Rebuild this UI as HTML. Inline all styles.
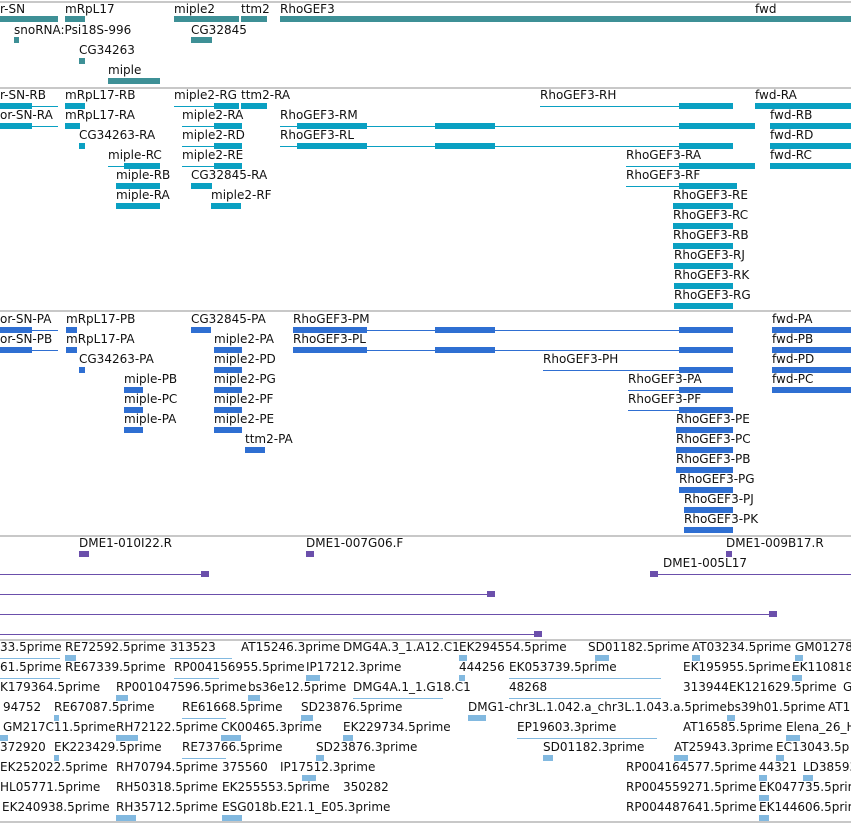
<!DOCTYPE html>
<html><head><meta charset="utf-8"><style>
body{margin:0;width:851px;height:823px;background:#fff;position:relative;overflow:hidden}
.t{position:absolute;font:12px "DejaVu Sans",sans-serif;line-height:14px;white-space:nowrap;color:#111;margin-top:0px}
.b{position:absolute;height:6px}
.l{position:absolute;height:1px}
.s{position:absolute;left:0;width:851px;height:2px;background:#c8c8c8}
.g{background:#3e9096}.x{background:#0aa0c2}.p{background:#2f6fd2}.u{background:#6b4fab}.e{background:#82b9e0}
</style></head><body>
<div class="s" style="top:1px"></div>
<div class="s" style="top:87px"></div>
<div class="s" style="top:310px"></div>
<div class="s" style="top:535px"></div>
<div class="s" style="top:639px"></div>
<div class="s" style="top:821px"></div>

<!-- genes -->
<div class="t" style="left:0;top:2px">r-SN</div><div class="b g" style="left:0;top:16px;width:58px"></div>
<div class="t" style="left:65px;top:2px">mRpL17</div><div class="b g" style="left:65px;top:16px;width:20px"></div>
<div class="t" style="left:174px;top:2px">miple2</div><div class="b g" style="left:174px;top:16px;width:65px"></div>
<div class="t" style="left:241px;top:2px">ttm2</div><div class="b g" style="left:241px;top:16px;width:26px"></div>
<div class="t" style="left:280px;top:2px">RhoGEF3</div><div class="b g" style="left:280px;top:16px;width:475px"></div>
<div class="t" style="left:755px;top:2px">fwd</div><div class="b g" style="left:755px;top:16px;width:96px"></div>
<div class="t" style="left:14px;top:23px">snoRNA:Psi18S-996</div><div class="b g" style="left:14px;top:37px;width:5px"></div>
<div class="t" style="left:191px;top:23px">CG32845</div><div class="b g" style="left:191px;top:37px;width:21px"></div>
<div class="t" style="left:79px;top:43px">CG34263</div><div class="b g" style="left:79px;top:58px;width:6px"></div>
<div class="t" style="left:108px;top:63px">miple</div><div class="b g" style="left:108px;top:78px;width:52px"></div>

<!-- transcripts -->
<div class="t" style="left:0;top:88px">r-SN-RB</div><div class="l x" style="left:0;top:106px;width:58px"></div><div class="b x" style="left:0;top:103px;width:32px"></div>
<div class="t" style="left:65px;top:88px">mRpL17-RB</div><div class="b x" style="left:65px;top:103px;width:20px"></div>
<div class="t" style="left:174px;top:88px">miple2-RG</div><div class="l x" style="left:174px;top:106px;width:65px"></div><div class="b x" style="left:214px;top:103px;width:25px"></div>
<div class="t" style="left:241px;top:88px">ttm2-RA</div><div class="b x" style="left:241px;top:103px;width:26px"></div>
<div class="t" style="left:540px;top:88px">RhoGEF3-RH</div><div class="l x" style="left:540px;top:106px;width:193px"></div><div class="b x" style="left:679px;top:103px;width:54px"></div>
<div class="t" style="left:755px;top:88px">fwd-RA</div><div class="b x" style="left:755px;top:103px;width:96px"></div>

<div class="t" style="left:0;top:108px">or-SN-RA</div><div class="l x" style="left:0;top:126px;width:58px"></div><div class="b x" style="left:0;top:123px;width:32px"></div>
<div class="t" style="left:65px;top:108px">mRpL17-RA</div><div class="b x" style="left:65px;top:123px;width:15px"></div>
<div class="t" style="left:182px;top:108px">miple2-RA</div><div class="l x" style="left:182px;top:126px;width:60px"></div><div class="b x" style="left:214px;top:123px;width:28px"></div>
<div class="t" style="left:280px;top:108px">RhoGEF3-RM</div><div class="l x" style="left:280px;top:126px;width:475px"></div><div class="b x" style="left:297px;top:123px;width:70px"></div><div class="b x" style="left:435px;top:123px;width:60px"></div><div class="b x" style="left:679px;top:123px;width:76px"></div>
<div class="t" style="left:770px;top:108px">fwd-RB</div><div class="b x" style="left:770px;top:123px;width:81px"></div>

<div class="t" style="left:79px;top:128px">CG34263-RA</div><div class="b x" style="left:79px;top:143px;width:6px"></div>
<div class="t" style="left:182px;top:128px">miple2-RD</div><div class="l x" style="left:182px;top:146px;width:60px"></div><div class="b x" style="left:214px;top:143px;width:28px"></div>
<div class="t" style="left:280px;top:128px">RhoGEF3-RL</div><div class="l x" style="left:280px;top:146px;width:453px"></div><div class="b x" style="left:297px;top:143px;width:70px"></div><div class="b x" style="left:435px;top:143px;width:60px"></div><div class="b x" style="left:679px;top:143px;width:54px"></div>
<div class="t" style="left:770px;top:128px">fwd-RD</div><div class="b x" style="left:770px;top:143px;width:81px"></div>

<div class="t" style="left:108px;top:148px">miple-RC</div><div class="l x" style="left:108px;top:166px;width:52px"></div><div class="b x" style="left:124px;top:163px;width:36px"></div>
<div class="t" style="left:182px;top:148px">miple2-RE</div><div class="l x" style="left:182px;top:166px;width:60px"></div><div class="b x" style="left:214px;top:163px;width:28px"></div>
<div class="t" style="left:626px;top:148px">RhoGEF3-RA</div><div class="l x" style="left:626px;top:166px;width:129px"></div><div class="b x" style="left:679px;top:163px;width:76px"></div>
<div class="t" style="left:770px;top:148px">fwd-RC</div><div class="b x" style="left:770px;top:163px;width:81px"></div>

<div class="t" style="left:116px;top:168px">miple-RB</div><div class="b x" style="left:116px;top:183px;width:44px"></div>
<div class="t" style="left:191px;top:168px">CG32845-RA</div><div class="b x" style="left:191px;top:183px;width:21px"></div>
<div class="t" style="left:626px;top:168px">RhoGEF3-RF</div><div class="l x" style="left:626px;top:186px;width:111px"></div><div class="b x" style="left:679px;top:183px;width:58px"></div>

<div class="t" style="left:116px;top:188px">miple-RA</div><div class="b x" style="left:116px;top:203px;width:44px"></div>
<div class="t" style="left:211px;top:188px">miple2-RF</div><div class="b x" style="left:211px;top:203px;width:30px"></div>
<div class="t" style="left:673px;top:188px">RhoGEF3-RE</div><div class="b x" style="left:673px;top:203px;width:60px"></div>
<div class="t" style="left:673px;top:208px">RhoGEF3-RC</div><div class="b x" style="left:673px;top:223px;width:60px"></div>
<div class="t" style="left:673px;top:228px">RhoGEF3-RB</div><div class="b x" style="left:673px;top:243px;width:60px"></div>
<div class="t" style="left:674px;top:248px">RhoGEF3-RJ</div><div class="b x" style="left:674px;top:263px;width:59px"></div>
<div class="t" style="left:674px;top:268px">RhoGEF3-RK</div><div class="b x" style="left:674px;top:283px;width:59px"></div>
<div class="t" style="left:674px;top:288px">RhoGEF3-RG</div><div class="b x" style="left:674px;top:303px;width:59px"></div>

<!-- proteins -->
<div class="t" style="left:0;top:312px">or-SN-PA</div><div class="l p" style="left:0;top:330px;width:58px"></div><div class="b p" style="left:0;top:327px;width:32px"></div>
<div class="t" style="left:66px;top:312px">mRpL17-PB</div><div class="b p" style="left:66px;top:327px;width:11px"></div>
<div class="t" style="left:191px;top:312px">CG32845-PA</div><div class="b p" style="left:191px;top:327px;width:20px"></div>
<div class="t" style="left:293px;top:312px">RhoGEF3-PM</div><div class="l p" style="left:293px;top:330px;width:440px"></div><div class="b p" style="left:293px;top:327px;width:74px"></div><div class="b p" style="left:435px;top:327px;width:60px"></div><div class="b p" style="left:679px;top:327px;width:54px"></div>
<div class="t" style="left:772px;top:312px">fwd-PA</div><div class="b p" style="left:772px;top:327px;width:79px"></div>

<div class="t" style="left:0;top:332px">or-SN-PB</div><div class="l p" style="left:0;top:350px;width:58px"></div><div class="b p" style="left:0;top:347px;width:32px"></div>
<div class="t" style="left:66px;top:332px">mRpL17-PA</div><div class="b p" style="left:66px;top:347px;width:11px"></div>
<div class="t" style="left:214px;top:332px">miple2-PA</div><div class="b p" style="left:214px;top:347px;width:28px"></div>
<div class="t" style="left:293px;top:332px">RhoGEF3-PL</div><div class="l p" style="left:293px;top:350px;width:440px"></div><div class="b p" style="left:293px;top:347px;width:74px"></div><div class="b p" style="left:435px;top:347px;width:60px"></div><div class="b p" style="left:679px;top:347px;width:54px"></div>
<div class="t" style="left:772px;top:332px">fwd-PB</div><div class="b p" style="left:772px;top:347px;width:79px"></div>

<div class="t" style="left:79px;top:352px">CG34263-PA</div><div class="b p" style="left:79px;top:367px;width:6px"></div>
<div class="t" style="left:214px;top:352px">miple2-PD</div><div class="b p" style="left:214px;top:367px;width:28px"></div>
<div class="t" style="left:543px;top:352px">RhoGEF3-PH</div><div class="l p" style="left:543px;top:370px;width:190px"></div><div class="b p" style="left:679px;top:367px;width:54px"></div>
<div class="t" style="left:772px;top:352px">fwd-PD</div><div class="b p" style="left:772px;top:367px;width:79px"></div>

<div class="t" style="left:124px;top:372px">miple-PB</div><div class="b p" style="left:124px;top:387px;width:19px"></div>
<div class="t" style="left:214px;top:372px">miple2-PG</div><div class="b p" style="left:214px;top:387px;width:28px"></div>
<div class="t" style="left:628px;top:372px">RhoGEF3-PA</div><div class="l p" style="left:628px;top:390px;width:105px"></div><div class="b p" style="left:679px;top:387px;width:54px"></div>
<div class="t" style="left:772px;top:372px">fwd-PC</div><div class="b p" style="left:772px;top:387px;width:79px"></div>

<div class="t" style="left:124px;top:392px">miple-PC</div><div class="b p" style="left:124px;top:407px;width:19px"></div>
<div class="t" style="left:214px;top:392px">miple2-PF</div><div class="b p" style="left:214px;top:407px;width:28px"></div>
<div class="t" style="left:628px;top:392px">RhoGEF3-PF</div><div class="l p" style="left:628px;top:410px;width:105px"></div><div class="b p" style="left:679px;top:407px;width:54px"></div>

<div class="t" style="left:124px;top:412px">miple-PA</div><div class="b p" style="left:124px;top:427px;width:19px"></div>
<div class="t" style="left:214px;top:412px">miple2-PE</div><div class="b p" style="left:214px;top:427px;width:28px"></div>
<div class="t" style="left:676px;top:412px">RhoGEF3-PE</div><div class="b p" style="left:676px;top:427px;width:57px"></div>
<div class="t" style="left:245px;top:432px">ttm2-PA</div><div class="b p" style="left:245px;top:447px;width:20px"></div>
<div class="t" style="left:676px;top:432px">RhoGEF3-PC</div><div class="b p" style="left:676px;top:447px;width:57px"></div>
<div class="t" style="left:676px;top:452px">RhoGEF3-PB</div><div class="b p" style="left:676px;top:467px;width:57px"></div>
<div class="t" style="left:679px;top:472px">RhoGEF3-PG</div><div class="b p" style="left:679px;top:487px;width:54px"></div>
<div class="t" style="left:684px;top:492px">RhoGEF3-PJ</div><div class="b p" style="left:684px;top:507px;width:49px"></div>
<div class="t" style="left:684px;top:512px">RhoGEF3-PK</div><div class="b p" style="left:684px;top:527px;width:49px"></div>

<!-- purple -->
<div class="t" style="left:79px;top:536px">DME1-010I22.R</div><div class="b u" style="left:79px;top:551px;width:10px"></div>
<div class="t" style="left:306px;top:536px">DME1-007G06.F</div><div class="b u" style="left:306px;top:551px;width:8px"></div>
<div class="t" style="left:726px;top:536px">DME1-009B17.R</div><div class="b u" style="left:726px;top:551px;width:6px"></div>
<div class="t" style="left:663px;top:556px">DME1-005L17</div>
<div class="l u" style="left:0;top:574px;width:209px"></div><div class="b u" style="left:201px;top:571px;width:8px"></div>
<div class="l u" style="left:650px;top:574px;width:201px"></div><div class="b u" style="left:650px;top:571px;width:8px"></div>
<div class="l u" style="left:0;top:594px;width:495px"></div><div class="b u" style="left:487px;top:591px;width:8px"></div>
<div class="l u" style="left:0;top:614px;width:777px"></div><div class="b u" style="left:769px;top:611px;width:8px"></div>
<div class="l u" style="left:0;top:634px;width:542px"></div><div class="b u" style="left:534px;top:631px;width:8px"></div>

<!-- ESTs -->
<div class="t" style="left:0;top:640px">33.5prime</div><div class="l e" style="left:0;top:658px;width:60px"></div>
<div class="t" style="left:65px;top:640px">RE72592.5prime</div><div class="b e" style="left:65px;top:655px;width:11px"></div>
<div class="t" style="left:170px;top:640px">313523</div><div class="l e" style="left:170px;top:658px;width:62px"></div>
<div class="t" style="left:241px;top:640px">AT15246.3prime</div>
<div class="t" style="left:343px;top:640px">DMG4A.3_1.A12.C1</div>
<div class="t" style="left:459px;top:640px">EK294554.5prime</div><div class="b e" style="left:459px;top:655px;width:8px"></div>
<div class="t" style="left:588px;top:640px">SD01182.5prime</div><div class="b e" style="left:595px;top:655px;width:14px"></div>
<div class="t" style="left:692px;top:640px">AT03234.5prime</div><div class="b e" style="left:692px;top:655px;width:8px"></div>
<div class="t" style="left:795px;top:640px">GM01278</div><div class="b e" style="left:795px;top:655px;width:8px"></div>

<div class="t" style="left:0;top:660px">61.5prime</div><div class="l e" style="left:0;top:678px;width:60px"></div>
<div class="t" style="left:65px;top:660px">RE67339.5prime</div>
<div class="t" style="left:174px;top:660px">RP004156955.5prime</div><div class="l e" style="left:174px;top:678px;width:45px"></div>
<div class="t" style="left:306px;top:660px">IP17212.3prime</div><div class="b e" style="left:306px;top:675px;width:14px"></div>
<div class="t" style="left:459px;top:660px">444256</div><div class="b e" style="left:459px;top:675px;width:6px"></div>
<div class="t" style="left:509px;top:660px">EK053739.5prime</div><div class="l e" style="left:509px;top:678px;width:152px"></div>
<div class="t" style="left:683px;top:660px">EK195955.5prime</div>
<div class="t" style="left:792px;top:660px">EK110818</div><div class="b e" style="left:792px;top:675px;width:10px"></div>

<div class="t" style="left:0;top:680px">K179364.5prime</div>
<div class="t" style="left:116px;top:680px">RP001047596.5prime</div><div class="b e" style="left:116px;top:695px;width:12px"></div>
<div class="t" style="left:248px;top:680px">bs36e12.5prime</div><div class="b e" style="left:248px;top:695px;width:12px"></div>
<div class="t" style="left:353px;top:680px">DMG4A.1_1.G18.C1</div><div class="l e" style="left:353px;top:698px;width:90px"></div>
<div class="t" style="left:509px;top:680px">48268</div><div class="l e" style="left:509px;top:698px;width:152px"></div>
<div class="t" style="left:683px;top:680px">313944</div>
<div class="t" style="left:729px;top:680px">EK121629.5prime</div>
<div class="t" style="left:843px;top:680px">G</div>

<div class="t" style="left:3px;top:700px">94752</div>
<div class="t" style="left:54px;top:700px">RE67087.5prime</div><div class="b e" style="left:54px;top:715px;width:5px"></div>
<div class="t" style="left:182px;top:700px">RE61668.5prime</div><div class="l e" style="left:182px;top:718px;width:44px"></div>
<div class="t" style="left:301px;top:700px">SD23876.5prime</div><div class="b e" style="left:301px;top:715px;width:12px"></div>
<div class="t" style="left:468px;top:700px">DMG1-chr3L.1.042.a_chr3L.1.043.a.5prime</div><div class="b e" style="left:468px;top:715px;width:18px"></div>
<div class="t" style="left:727px;top:700px">bs39h01.5prime</div><div class="b e" style="left:727px;top:715px;width:8px"></div>
<div class="t" style="left:828px;top:700px">AT1</div>

<div class="t" style="left:3px;top:720px">GM217C11.5prime</div><div class="b e" style="left:0;top:735px;width:8px"></div>
<div class="t" style="left:116px;top:720px">RH72122.5prime</div><div class="b e" style="left:116px;top:735px;width:22px"></div>
<div class="t" style="left:221px;top:720px">CK00465.3prime</div><div class="b e" style="left:221px;top:735px;width:20px"></div>
<div class="t" style="left:343px;top:720px">EK229734.5prime</div><div class="b e" style="left:343px;top:735px;width:10px"></div>
<div class="t" style="left:517px;top:720px">EP19603.3prime</div><div class="l e" style="left:517px;top:738px;width:140px"></div>
<div class="t" style="left:683px;top:720px">AT16585.5prime</div>
<div class="t" style="left:786px;top:720px">Elena_26_H</div><div class="b e" style="left:786px;top:735px;width:14px"></div>

<div class="t" style="left:0;top:740px">372920</div>
<div class="t" style="left:54px;top:740px">EK223429.5prime</div><div class="b e" style="left:54px;top:755px;width:5px"></div>
<div class="t" style="left:182px;top:740px">RE73766.5prime</div><div class="l e" style="left:182px;top:758px;width:44px"></div>
<div class="t" style="left:316px;top:740px">SD23876.3prime</div><div class="b e" style="left:316px;top:755px;width:8px"></div>
<div class="t" style="left:543px;top:740px">SD01182.3prime</div><div class="b e" style="left:543px;top:755px;width:10px"></div>
<div class="t" style="left:674px;top:740px">AT25943.3prime</div><div class="b e" style="left:674px;top:755px;width:14px"></div>
<div class="t" style="left:776px;top:740px">EC13043.5p</div><div class="b e" style="left:776px;top:755px;width:8px"></div>

<div class="t" style="left:0;top:760px">EK252022.5prime</div>
<div class="t" style="left:116px;top:760px">RH70794.5prime</div>
<div class="t" style="left:222px;top:760px">375560</div>
<div class="t" style="left:280px;top:760px">IP17512.3prime</div><div class="b e" style="left:302px;top:775px;width:14px"></div>
<div class="t" style="left:626px;top:760px">RP004164577.5prime</div><div class="b e" style="left:759px;top:775px;width:8px"></div>
<div class="t" style="left:759px;top:760px">44321</div>
<div class="t" style="left:803px;top:760px">LD38593</div><div class="b e" style="left:803px;top:775px;width:10px"></div>

<div class="t" style="left:0;top:780px">HL05771.5prime</div>
<div class="t" style="left:116px;top:780px">RH50318.5prime</div>
<div class="t" style="left:222px;top:780px">EK255553.5prime</div>
<div class="t" style="left:343px;top:780px">350282</div>
<div class="t" style="left:626px;top:780px">RP004559271.5prime</div><div class="b e" style="left:759px;top:795px;width:10px"></div>
<div class="t" style="left:759px;top:780px">EK047735.5prime</div>

<div class="t" style="left:2px;top:800px">EK240938.5prime</div>
<div class="t" style="left:116px;top:800px">RH35712.5prime</div><div class="b e" style="left:116px;top:815px;width:20px"></div>
<div class="t" style="left:222px;top:800px">ESG018b.E21.1_E05.3prime</div><div class="b e" style="left:222px;top:815px;width:20px"></div>
<div class="t" style="left:626px;top:800px">RP004487641.5prime</div><div class="b e" style="left:759px;top:815px;width:10px"></div>
<div class="t" style="left:759px;top:800px">EK144606.5prime</div>
</body></html>
